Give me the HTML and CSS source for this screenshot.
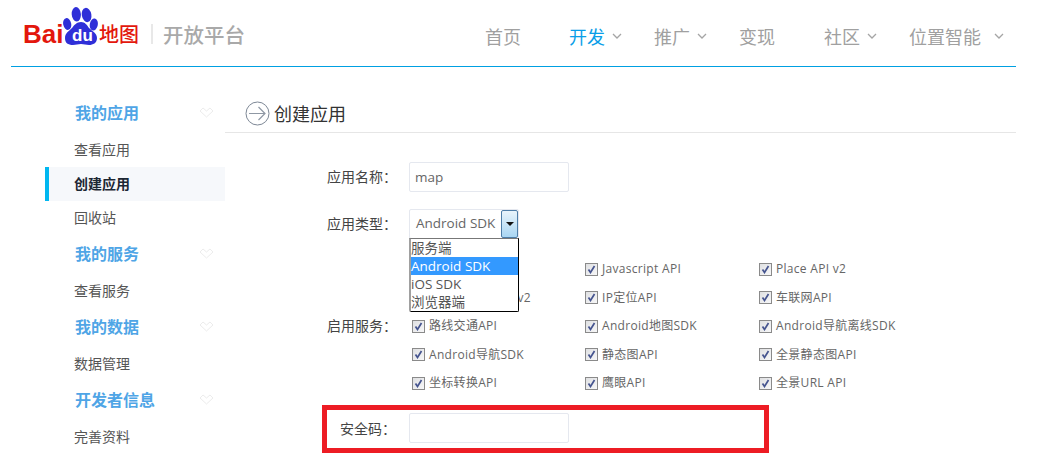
FILE: index.html
```html
<!DOCTYPE html>
<html lang="zh">
<head>
<meta charset="utf-8">
<title>创建应用</title>
<link rel="stylesheet" href="styles.css">
</head>
<body>
<header class="header">
  <div class="logo">
    <span class="logo-bai">Bai</span>
    <span class="paw">
      <svg width="35" height="38" viewBox="0 0 35 38">
        <g fill="#2f2fd8">
          <ellipse cx="4.200" cy="17" rx="4" ry="6" transform="rotate(-12 4.200 17)"/>
          <ellipse cx="13.300" cy="7.300" rx="4.600" ry="7.200" transform="rotate(-4 13.300 7.300)"/>
          <ellipse cx="23.600" cy="8" rx="4.800" ry="7.200" transform="rotate(-10 23.600 8)"/>
          <ellipse cx="30.800" cy="17.500" rx="4" ry="6" transform="rotate(10 30.800 17.500)"/>
          <path d="M18 15c4 0 6 3 8 6 3 3 8 5 8 10 0 5-4 7-8 7-3 0-5-1-8-1s-5 1-8 1c-5 0-8-2-8-7 0-5 4-7 7-10 2-3 5-6 9-6z"/>
        </g>
      </svg>
      <span class="paw-du">du</span>
    </span>
    <span class="logo-map">地图</span>
    <span class="logo-sep"></span>
    <span class="logo-open">开放平台</span>
  </div>
  <nav class="nav">
    <a class="nav-item nav-home">首页</a>
    <a class="nav-item nav-drop active">开发<svg class="caret" width="10" height="6" viewBox="0 0 10 6"><path d="M1 1l4 4 4-4" fill="none" stroke="#a5a5a5" stroke-width="1.300"/></svg></a>
    <a class="nav-item nav-drop">推广<svg class="caret" width="10" height="6" viewBox="0 0 10 6"><path d="M1 1l4 4 4-4" fill="none" stroke="#a5a5a5" stroke-width="1.300"/></svg></a>
    <a class="nav-item nav-plain">变现</a>
    <a class="nav-item nav-drop">社区<svg class="caret" width="10" height="6" viewBox="0 0 10 6"><path d="M1 1l4 4 4-4" fill="none" stroke="#a5a5a5" stroke-width="1.300"/></svg></a>
    <a class="nav-item nav-last">位置智能<svg class="caret caret-wide" width="10" height="6" viewBox="0 0 10 6"><path d="M1 1l4 4 4-4" fill="none" stroke="#a5a5a5" stroke-width="1.300"/></svg></a>
  </nav>
</header>

<div class="page">
  <aside class="side">
    <div class="side-head">我的应用<svg class="fold" width="15" height="11" viewBox="0 0 15 11"><path d="M1 4 7.500 10 14 4 11 1 7.500 4 4 1z" fill="none" stroke="#ececec" stroke-width="1"/></svg></div>
    <a class="side-item">查看应用</a>
    <a class="side-item current">创建应用</a>
    <a class="side-item">回收站</a>
    <div class="side-head">我的服务<svg class="fold" width="15" height="11" viewBox="0 0 15 11"><path d="M1 4 7.500 10 14 4 11 1 7.500 4 4 1z" fill="none" stroke="#ececec" stroke-width="1"/></svg></div>
    <a class="side-item">查看服务</a>
    <div class="side-head">我的数据<svg class="fold" width="15" height="11" viewBox="0 0 15 11"><path d="M1 4 7.500 10 14 4 11 1 7.500 4 4 1z" fill="none" stroke="#ececec" stroke-width="1"/></svg></div>
    <a class="side-item">数据管理</a>
    <div class="side-head">开发者信息<svg class="fold" width="15" height="11" viewBox="0 0 15 11"><path d="M1 4 7.500 10 14 4 11 1 7.500 4 4 1z" fill="none" stroke="#ececec" stroke-width="1"/></svg></div>
    <a class="side-item">完善资料</a>
  </aside>

  <main class="main">
    <h1 class="title">
      <svg width="25" height="25" viewBox="0 0 25 25"><circle cx="12.500" cy="12.500" r="11.500" fill="none" stroke="#7d8795" stroke-width="1"/><path d="M4 12.500h16M13.500 6l6.500 6.500-6.500 6.500" fill="none" stroke="#8f98a4" stroke-width="1.200"/></svg>
      <span>创建应用</span>
    </h1>
    <div class="form">
      <div class="row row-name">
        <label class="lbl">应用名称：</label>
        <div class="input">map</div>
      </div>
      <div class="row row-type">
        <label class="lbl">应用类型：</label>
        <div class="select">
          <span class="select-val">Android SDK</span>
          <span class="select-btn"><svg width="8" height="4" viewBox="0 0 8 4"><path d="M0 0h8L4 4z" fill="#111"/></svg></span>
          <ul class="menu">
            <li>服务端</li>
            <li class="picked">Android SDK</li>
            <li>iOS SDK</li>
            <li>浏览器端</li>
          </ul>
        </div>
      </div>
      <div class="row row-svc">
        <label class="lbl lbl-svc">启用服务：</label>
        <div class="checks">
          <label class="chk"><i class="box"><svg width="9" height="9" viewBox="0 0 9 9"><path d="M1.500 4.500 3.500 7.500 7.500 1" fill="none" stroke="#45548f" stroke-width="1.700"/></svg></i>云检索API</label>
          <label class="chk"><i class="box"><svg width="9" height="9" viewBox="0 0 9 9"><path d="M1.500 4.500 3.500 7.500 7.500 1" fill="none" stroke="#45548f" stroke-width="1.700"/></svg></i>Javascript API</label>
          <label class="chk"><i class="box"><svg width="9" height="9" viewBox="0 0 9 9"><path d="M1.500 4.500 3.500 7.500 7.500 1" fill="none" stroke="#45548f" stroke-width="1.700"/></svg></i>Place API v2</label>
          <label class="chk"><i class="box"><svg width="9" height="9" viewBox="0 0 9 9"><path d="M1.500 4.500 3.500 7.500 7.500 1" fill="none" stroke="#45548f" stroke-width="1.700"/></svg></i>Geocoding API v2</label>
          <label class="chk"><i class="box"><svg width="9" height="9" viewBox="0 0 9 9"><path d="M1.500 4.500 3.500 7.500 7.500 1" fill="none" stroke="#45548f" stroke-width="1.700"/></svg></i>IP定位API</label>
          <label class="chk"><i class="box"><svg width="9" height="9" viewBox="0 0 9 9"><path d="M1.500 4.500 3.500 7.500 7.500 1" fill="none" stroke="#45548f" stroke-width="1.700"/></svg></i>车联网API</label>
          <label class="chk"><i class="box"><svg width="9" height="9" viewBox="0 0 9 9"><path d="M1.500 4.500 3.500 7.500 7.500 1" fill="none" stroke="#45548f" stroke-width="1.700"/></svg></i>路线交通API</label>
          <label class="chk"><i class="box"><svg width="9" height="9" viewBox="0 0 9 9"><path d="M1.500 4.500 3.500 7.500 7.500 1" fill="none" stroke="#45548f" stroke-width="1.700"/></svg></i>Android地图SDK</label>
          <label class="chk"><i class="box"><svg width="9" height="9" viewBox="0 0 9 9"><path d="M1.500 4.500 3.500 7.500 7.500 1" fill="none" stroke="#45548f" stroke-width="1.700"/></svg></i>Android导航离线SDK</label>
          <label class="chk"><i class="box"><svg width="9" height="9" viewBox="0 0 9 9"><path d="M1.500 4.500 3.500 7.500 7.500 1" fill="none" stroke="#45548f" stroke-width="1.700"/></svg></i>Android导航SDK</label>
          <label class="chk"><i class="box"><svg width="9" height="9" viewBox="0 0 9 9"><path d="M1.500 4.500 3.500 7.500 7.500 1" fill="none" stroke="#45548f" stroke-width="1.700"/></svg></i>静态图API</label>
          <label class="chk"><i class="box"><svg width="9" height="9" viewBox="0 0 9 9"><path d="M1.500 4.500 3.500 7.500 7.500 1" fill="none" stroke="#45548f" stroke-width="1.700"/></svg></i>全景静态图API</label>
          <label class="chk"><i class="box"><svg width="9" height="9" viewBox="0 0 9 9"><path d="M1.500 4.500 3.500 7.500 7.500 1" fill="none" stroke="#45548f" stroke-width="1.700"/></svg></i>坐标转换API</label>
          <label class="chk"><i class="box"><svg width="9" height="9" viewBox="0 0 9 9"><path d="M1.500 4.500 3.500 7.500 7.500 1" fill="none" stroke="#45548f" stroke-width="1.700"/></svg></i>鹰眼API</label>
          <label class="chk"><i class="box"><svg width="9" height="9" viewBox="0 0 9 9"><path d="M1.500 4.500 3.500 7.500 7.500 1" fill="none" stroke="#45548f" stroke-width="1.700"/></svg></i>全景URL API</label>
        </div>
      </div>
      <div class="row row-code">
        <label class="lbl">安全码：</label>
        <div class="input"></div>
        <span class="redbox"></span>
      </div>
    </div>
  </main>
</div>
</body>
</html>
```
FILE: styles.css
```css
* { box-sizing: border-box; }
html, body { margin: 0; padding: 0; }
body {
  width: 1043px;
  height: 475px;
  overflow: hidden;
  background: #fff;
  color: #555;
  font-family: "Open Sans", "Noto Sans CJK SC", sans-serif;
  font-size: 13px;
}

/* header */
.header {
  display: flex;
  justify-content: space-between;
  margin: 0 27px 0 11px;
  height: 67px;
  border-bottom: 1px solid #00a0e2;
}
.logo {
  display: flex;
  align-items: flex-start;
  padding: 7px 0 0 12px;
}
.logo-bai {
  width: 40px;
  margin-top: 12px;
  font: 700 26px/30px "Liberation Sans", sans-serif;
  color: #e3170d;
}
.paw { position: relative; flex: none; width: 35px; height: 38px; }
.paw svg { display: block; }
.paw-du {
  position: absolute;
  left: 9px;
  top: 21px;
  font: 700 17px/15px "Liberation Sans", sans-serif;
  color: #fff;
}
.logo-map {
  margin: 13px 0 0 1px;
  font: 500 20px/27px "Noto Sans CJK SC", sans-serif;
  color: #e3170d;
}
.logo-sep {
  width: 2px;
  height: 20px;
  margin: 17px 10px 0 12px;
  background: #e8e8e8;
}
.logo-open {
  margin-top: 13px;
  font: 500 20.500px/28px "Noto Sans CJK SC", sans-serif;
  color: #a9a9a9;
}
.nav {
  display: flex;
  padding: 23px 12px 0 0;
}
.nav-item {
  display: flex;
  align-items: center;
  height: 26px;
  font: 400 18px/26px "Noto Sans CJK SC", sans-serif;
  color: #a0a0a0;
}
.nav-home { margin-right: 48px; }
.nav-drop { margin-right: 32px; }
.nav-plain { margin-right: 49px; }
.nav-last { margin-right: 0; }
.nav-item.active { color: #0a9ee8; }
.caret { margin-left: 7px; }
.caret-wide { margin-left: 13px; }

/* layout */
.page {
  display: flex;
  margin: 0 27px 0 45px;
}

/* sidebar */
.side {
  flex: none;
  width: 180px;
  padding-top: 27px;
}
.side-head {
  display: flex;
  align-items: center;
  justify-content: space-between;
  height: 36px;
  margin-bottom: 3px;
  padding: 0 11px 0 30px;
  font: 700 16px/36px "Noto Sans CJK SC", sans-serif;
  color: #4fa5e6;
}
.side-item {
  display: block;
  height: 34px;
  padding-left: 29px;
  font: 400 14px/32px "Noto Sans CJK SC", sans-serif;
  color: #555;
}
.side-item.current {
  padding-left: 25px;
  border-left: 4px solid #00b7f0;
  background: #f6f8fb;
  color: #1c2733;
  font-weight: 700;
}

/* main */
.main { flex: 1; min-width: 0; }
.title {
  display: flex;
  align-items: center;
  gap: 4px;
  height: 66px;
  margin: 0;
  padding: 27px 0 0 20px;
  border-bottom: 1px solid #e6e6e6;
  font: 400 18px/26px "Noto Sans CJK SC", sans-serif;
  color: #333;
}
.form { padding-top: 29px; }
.row { position: relative; display: flex; }
.lbl {
  flex: none;
  width: 184px;
  padding-right: 12px;
  text-align: right;
  font: 400 14px/30px "Noto Sans CJK SC", sans-serif;
  color: #444;
}
.row-name .lbl, .row-type .lbl { line-height: 28px; }
.row-code .lbl { padding-right: 13px; }
.input {
  width: 160px;
  height: 30px;
  padding-left: 5px;
  border: 1px solid #e5e8ef;
  border-radius: 2px;
  font-size: 13.500px;
  line-height: 28px;
  color: #666;
}
.row-type { margin-top: 17px; }
.select {
  position: relative;
  display: flex;
  width: 110px;
  height: 30px;
  padding: 0 0 0 6px;
  border: 1px solid #e5e8ef;
  border-radius: 2px;
  font-size: 13.500px;
  line-height: 26px;
  color: #666;
}
.select-val { flex: 1; white-space: nowrap; }
.select-btn {
  position: absolute;
  top: 0;
  right: 0;
  display: flex;
  align-items: center;
  justify-content: center;
  width: 17px;
  height: 28px;
  border: 1px solid #4f7ea8;
  border-radius: 2px;
  background: linear-gradient(#e9f4fb, #a9d6f3);
}
.menu {
  position: absolute;
  z-index: 2;
  top: 28px;
  left: -1px;
  width: 110px;
  height: 74px;
  margin: 0;
  padding: 0;
  list-style: none;
  background: #fff;
  border: 1px solid #000;
  border-left: 2px solid #a0a0a0;
  border-top-color: #777;
  border-radius: 0 0 2px 2px;
}
.menu li {
  height: 18px;
  font-size: 13.500px;
  line-height: 18px;
  color: #555;
}
.menu li.picked { background: #3399ff; color: #fff; }
.row-svc { padding-top: 16px; }
.row-svc .lbl-svc { padding-top: 55px; line-height: 30px; }
.checks {
  display: grid;
  grid-template-columns: 173px 174px auto;
  grid-auto-rows: 28.500px;
  margin-left: 3px;
  margin-bottom: -0.500px;
}
.chk {
  display: flex;
  align-items: center;
  font-size: 12px;
  letter-spacing: 0.300px;
  line-height: 16px;
  color: #666;
  white-space: nowrap;
}
.box {
  display: flex;
  align-items: center;
  justify-content: center;
  flex: none;
  width: 13px;
  height: 13px;
  margin-right: 4px;
  border: 1px solid #8a8a8a;
  background: linear-gradient(135deg, #dfe0e2, #f7f7f8);
}
.row-code { margin-top: 16px; }
.redbox {
  position: absolute;
  left: 97px;
  top: -8px;
  width: 447px;
  height: 48px;
  border: 5px solid #ed1c24;
}
```
